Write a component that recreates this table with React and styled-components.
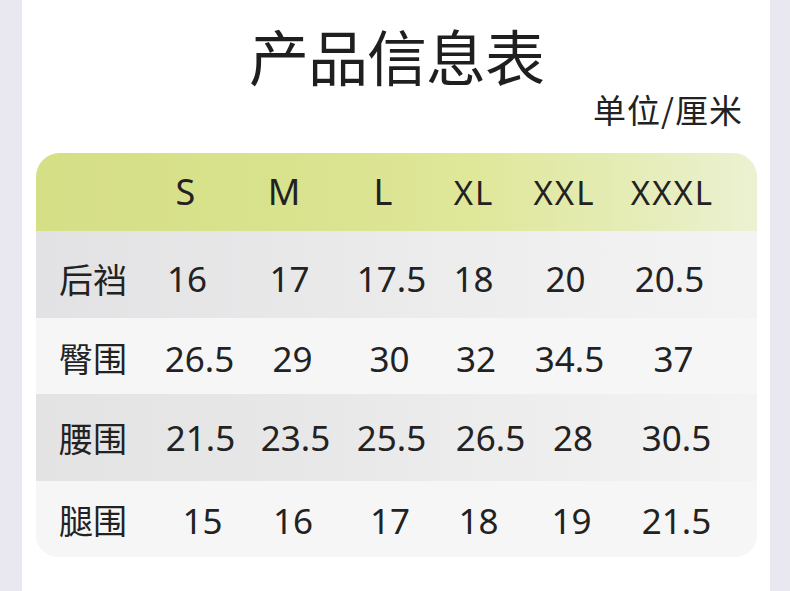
import React from "react";
import styled, { createGlobalStyle } from "styled-components";

const Global = createGlobalStyle`
  html, body { margin: 0; padding: 0; background: #ffffff; }
  body { font-family: "Noto Sans", "Noto Sans CJK SC", sans-serif; color: #222; }
`;

const Page = styled.div`
  display: flex;
  width: 790px;
  height: 591px;
  overflow: hidden;
`;

const Strip = styled.div`
  flex: 0 0 ${(p) => p.$w}px;
  background: #e9e7ef;
`;

const Main = styled.main`
  flex: 1;
  background: #ffffff;
  display: flex;
  flex-direction: column;
  padding: 23px 13px 0 14px;
`;

const Title = styled.h1`
  margin: 0;
  text-align: center;
  font-family: "Noto Sans CJK SC", sans-serif;
  font-weight: 400;
  font-size: 60px;
  line-height: 64px;
  color: #1f1f1f;
  letter-spacing: -1px;
`;

const Unit = styled.div`
  align-self: flex-end;
  margin: 2px 14px 0 0;
  font-family: "Noto Sans CJK SC", sans-serif;
  font-size: 33px;
  line-height: 40px;
  letter-spacing: 1px;
  color: #222;
`;

const Table = styled.div`
  margin-top: 24px;
  border-radius: 24px 24px 22px 22px;
  overflow: hidden;
  background: #f6f6f6;
`;

const Row = styled.div`
  display: grid;
  grid-template-columns: 114px 90px 102px 96px 78px 104px 106px;
  align-items: center;
  height: ${(p) => p.$h}px;
  padding-top: ${(p) => p.$pt}px;
  box-sizing: border-box;
  background: ${(p) => p.$bg};
`;

const HeadCell = styled.div`
  text-align: center;
  font-size: ${(p) => p.$size}px;
  line-height: 1;
  color: #222;
  letter-spacing: ${(p) => (p.$size < 35 ? 2 : 0)}px;
  transform: translateX(${(p) => p.$dx}px);
`;

const Label = styled.div`
  text-align: center;
  font-family: "Noto Sans CJK SC", sans-serif;
  font-size: 34px;
  line-height: 1;
  color: #222;
`;

const Value = styled.div`
  text-align: center;
  font-size: 35px;
  line-height: 1;
  color: #222;
  transform: translateX(${(p) => p.$dx}px);
`;

const centers = [195, 291, 390, 477, 568, 673];

const header = [
  ["S", 185.5, 36],
  ["M", 284, 36],
  ["L", 383, 36],
  ["XL", 474, 33],
  ["XXL", 564.5, 33],
  ["XXXL", 672.5, 33],
];

const rows = [
  {
    label: "后裆",
    h: 87,
    pt: 8,
    bg: "linear-gradient(90deg, #e2e2e4 0%, #e9e9ea 40%, #f0f0f0 75%, #f3f3f3 100%)",
    cells: [["16", 187], ["17", 289.5], ["17.5", 391.5], ["18", 473.5], ["20", 565.5], ["20.5", 669.5]],
  },
  {
    label: "臀围",
    h: 76,
    pt: 4,
    bg: "#f6f6f6",
    cells: [["26.5", 199.5], ["29", 292.5], ["30", 389.5], ["32", 476], ["34.5", 569.5], ["37", 673.5]],
  },
  {
    label: "腰围",
    h: 87,
    pt: 0,
    bg: "linear-gradient(90deg, #e3e3e4 0%, #e8e8e9 40%, #efefef 75%, #f3f3f3 100%)",
    cells: [["21.5", 200.5], ["23.5", 295.5], ["25.5", 391.5], ["26.5", 490.5], ["28", 573], ["30.5", 676.5]],
  },
  {
    label: "腿围",
    h: 76,
    pt: 2,
    bg: "#f6f6f6",
    cells: [["15", 202.5], ["16", 293], ["17", 390], ["18", 478.5], ["19", 571.5], ["21.5", 676.5]],
  },
];

export default function App() {
  return (
    <>
      <Global />
      <Page>
        <Strip $w={22} />
        <Main>
          <Title>产品信息表</Title>
          <Unit>单位/厘米</Unit>
          <Table>
            <Row
              $h={78}
              $pt={0}
              $bg="linear-gradient(90deg, #d5df86 0%, #d9e28d 35%, #dfe799 60%, #e5ecb6 82%, #ecf1d2 100%)"
            >
              <div />
              {header.map(([t, c, s], i) => (
                <HeadCell key={t} $size={s} $dx={c - centers[i]}>
                  {t}
                </HeadCell>
              ))}
            </Row>
            {rows.map((r) => (
              <Row key={r.label} $h={r.h} $pt={r.pt} $bg={r.bg}>
                <Label>{r.label}</Label>
                {r.cells.map(([t, c], i) => (
                  <Value key={i} $dx={c - centers[i]}>
                    {t}
                  </Value>
                ))}
              </Row>
            ))}
          </Table>
        </Main>
        <Strip $w={20} />
      </Page>
    </>
  );
}
